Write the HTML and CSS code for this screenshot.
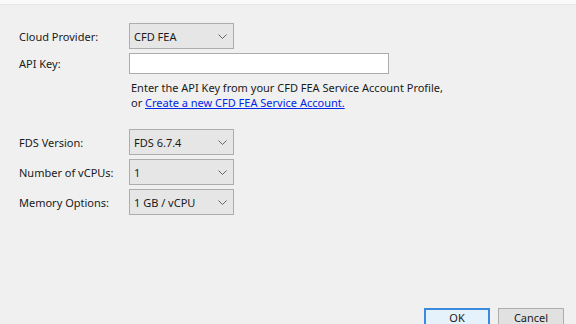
FILE: index.html
```html
<!DOCTYPE html>
<html lang="en">
<head>
  <meta charset="UTF-8" />
  <title>Cloud Settings</title>
  <link rel="stylesheet" href="styles.css">
</head>
<body>
  <div class="topbar"></div>

  <div class="form">
    <div class="row row-combo">
      <label class="label">Cloud Provider:</label>
      <div class="combo">
        <span>CFD FEA</span>
        <svg class="chev" width="9" height="5" viewBox="0 0 9 5"><path d="M0.5 0.5 L4.5 4.5 L8.5 0.5" fill="none" stroke="#666" stroke-width="1"/></svg>
      </div>
    </div>

    <div class="row row-input">
      <label class="label">API Key:</label>
      <div class="textbox"></div>
    </div>

    <div class="help">
      <p>Enter the API Key from your CFD FEA Service Account Profile,</p>
      <p>or <a href="#">Create a new CFD FEA Service Account.</a></p>
    </div>

    <div class="row row-combo first-group">
      <label class="label">FDS Version:</label>
      <div class="combo">
        <span>FDS 6.7.4</span>
        <svg class="chev" width="9" height="5" viewBox="0 0 9 5"><path d="M0.5 0.5 L4.5 4.5 L8.5 0.5" fill="none" stroke="#666" stroke-width="1"/></svg>
      </div>
    </div>

    <div class="row row-combo">
      <label class="label">Number of vCPUs:</label>
      <div class="combo">
        <span>1</span>
        <svg class="chev" width="9" height="5" viewBox="0 0 9 5"><path d="M0.5 0.5 L4.5 4.5 L8.5 0.5" fill="none" stroke="#666" stroke-width="1"/></svg>
      </div>
    </div>

    <div class="row row-combo">
      <label class="label">Memory Options:</label>
      <div class="combo">
        <span>1 GB / vCPU</span>
        <svg class="chev" width="9" height="5" viewBox="0 0 9 5"><path d="M0.5 0.5 L4.5 4.5 L8.5 0.5" fill="none" stroke="#666" stroke-width="1"/></svg>
      </div>
    </div>
  </div>

  <div class="buttons">
    <button class="btn btn-default">OK</button>
    <button class="btn">Cancel</button>
  </div>
</body>
</html>
```

FILE: styles.css
```css
* {
  margin: 0;
  padding: 0;
  box-sizing: border-box;
}

body {
  width: 576px;
  height: 324px;
  overflow: hidden;
  background: #f0f0f0;
  font-family: "Noto Sans", sans-serif;
  font-size: 11px;
  color: #1a1a1a;
  display: flex;
  flex-direction: column;
}

.topbar {
  height: 5px;
  background: #fafafa;
  border-bottom: 1px solid #e6e6e6;
}

.form {
  padding: 18px 0 0 19px;
  display: flex;
  flex-direction: column;
}

.row {
  display: flex;
  align-items: center;
}

.row + .row {
  margin-top: 4px;
}

.label {
  width: 110px;
}

.combo {
  width: 105px;
  height: 26px;
  background: #e6e6e6;
  border: 1px solid #adadad;
  display: flex;
  align-items: center;
  justify-content: space-between;
  padding: 0 6px 0 4px;
}

.textbox {
  width: 260px;
  height: 21px;
  background: #fff;
  border: 1px solid #acacac;
}

.help {
  margin: 6px 0 0 112px;
  line-height: 15px;
}

.help a {
  color: #0026e6;
}

.first-group {
  margin-top: 19px;
}

.buttons {
  margin-top: auto;
  display: flex;
  justify-content: flex-end;
  gap: 8px;
  padding-right: 12px;
  margin-bottom: -8px;
}

.btn {
  width: 66px;
  height: 24px;
  padding-bottom: 5px;
  font-family: inherit;
  font-size: 11px;
  color: #1a1a1a;
  background: #e1e1e1;
  border: 1px solid #adadad;
}

.btn-default {
  border: 2px solid #3c8adb;
  background: #e5f1fb;
}
```
